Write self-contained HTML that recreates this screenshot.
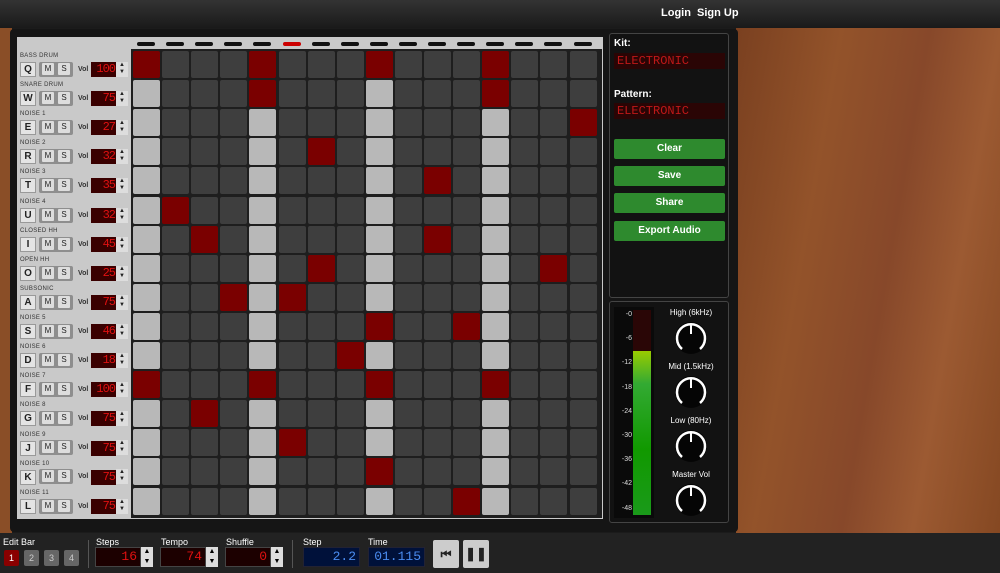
<!DOCTYPE html><html><head><style>
*{margin:0;padding:0;box-sizing:border-box}
body{width:1000px;height:573px;overflow:hidden;background:#1b1b1b;font-family:"Liberation Sans",sans-serif;position:relative}
.a{position:absolute}
#wood{left:736px;top:28px;width:264px;height:505px;background:linear-gradient(100deg,#7a4020,#93532a 30%,#87482a 55%,#9c5a32 75%,#854822)}
#top{left:0;top:0;width:1000px;height:28px;background:linear-gradient(#333,#1a1a1a);color:#fff;font-size:11px;font-weight:bold}
#frame{left:10px;top:29px;width:728px;height:503px;background:#151515;border-radius:4px}
#lwood{left:0;top:28px;width:12px;height:505px;background:#8a4e27}
#inner{left:17px;top:37px;width:586px;height:482px;background:#c9c9c9}
#gb{left:131px;top:49px;width:471px;height:469px;background:#1e1e1e}
.lab{font-size:6px;color:#333;left:20px;letter-spacing:.3px}
.k{width:16px;height:15px;background:#e4e4e4;border:1px solid #999;font-size:10px;font-weight:bold;text-align:center;line-height:13px;color:#222}
.g{width:34px;height:15px;background:#8e8e8e;border-radius:2px}
.ms{width:12px;height:12px;background:#ddd;font-size:8px;text-align:center;line-height:12px;color:#222;top:1px;border-radius:1px}
.vl{font-size:7px;color:#333;font-weight:bold}
.d{width:25px;height:15px;background:#3a0000;color:#e01010;font-family:"Liberation Mono",monospace;font-size:12px;text-align:right;line-height:15px;padding-right:1px;letter-spacing:-1px}
.ar{width:12px;height:15px;background:#ddd;font-size:6px;line-height:7px;text-align:center;color:#222}
.c{width:27px;height:27px;border-radius:2px;background:#3e3e3e}
.L{background:#b8b8b8}.R{background:#7a0000}
.ind{width:18px;height:4px;border-radius:2px;background:#111;top:42px}
.pn{border:1px solid #444;border-radius:3px;background:#121212}
.btn{left:614px;width:111px;height:20px;background:#2e8a2e;border-radius:2px;color:#fff;font-size:10px;font-weight:bold;text-align:center;line-height:20px}
.lcd{left:614px;width:111px;height:16px;background:#2a0505;color:#c01818;font-family:"Liberation Mono",monospace;font-size:12px;line-height:16px;padding-left:3px}
.wl{color:#fff;font-size:10px;font-weight:bold}
.sc{color:#ddd;font-size:7px;left:614px;width:18px;text-align:right}
.kn{color:#fff;font-size:8px;width:80px;text-align:center;left:651px}
.bl{color:#fff;font-size:9px}
.bd{height:20px;background:#1c0000;border:1px solid #444;color:#e01010;font-family:"Liberation Mono",monospace;font-size:13px;text-align:right;line-height:18px;padding-right:3px}
.bu{height:20px;background:#00113a;border:1px solid #223;color:#4a8cf0;font-family:"Liberation Mono",monospace;font-size:13px;text-align:right;line-height:18px;padding-right:3px}
.bar{width:15px;height:16px;background:#666;color:#ccc;font-size:9px;text-align:center;line-height:16px;border-radius:2px;top:550px}
.ba{width:12px;height:20px;background:#ddd;top:547px;font-size:7px;line-height:10px;text-align:center}
</style></head><body>
<div class="a" id="top"><span class="a" style="left:661px;top:7px">Login</span><span class="a" style="left:697px;top:7px">Sign Up</span></div>
<div class="a" id="lwood"></div>
<div class="a" id="wood"></div>
<div class="a" id="frame"></div>
<div class="a" id="inner"></div>
<div class="a" id="gb"></div>
<div id="g"></div>
<div class="a pn" style="left:609px;top:33px;width:120px;height:265px"></div>
<div class="a wl" style="left:614px;top:38px">Kit:</div>
<div class="a lcd" style="top:53px">ELECTRONIC</div>
<div class="a wl" style="left:614px;top:89px">Pattern:</div>
<div class="a lcd" style="top:103px">ELECTRONIC</div>
<div class="a btn" style="top:139px">Clear</div>
<div class="a btn" style="top:166px">Save</div>
<div class="a btn" style="top:193px">Share</div>
<div class="a btn" style="top:221px">Export Audio</div>
<div class="a pn" style="left:609px;top:301px;width:120px;height:222px"></div>
<div class="a" style="left:614px;top:307px;width:40px;height:211px;background:#0a0a0a"></div>
<div class="a" style="left:633px;top:310px;width:18px;height:41px;background:#2a0606"></div>
<div class="a" style="left:633px;top:351px;width:18px;height:164px;background:linear-gradient(#9c0 ,#3a3 20%,#190 60%,#1a9a1a)"></div>
<div id="sc"></div>
<div class="a kn" style="top:308px">High (6kHz)</div>
<div class="a kn" style="top:362px">Mid (1.5kHz)</div>
<div class="a kn" style="top:416px">Low (80Hz)</div>
<div class="a kn" style="top:470px">Master Vol</div>
<div id="kn"></div>
<div class="a" style="left:0;top:533px;width:1000px;height:40px;background:#222"></div>
<div class="a bl" style="left:3px;top:537px">Edit Bar</div>
<div class="a bar" style="left:4px;background:#8a0000;color:#fff">1</div>
<div class="a bar" style="left:24px">2</div>
<div class="a bar" style="left:44px">3</div>
<div class="a bar" style="left:64px">4</div>
<div class="a" style="left:88px;top:540px;width:1px;height:28px;background:#555"></div>
<div class="a bl" style="left:96px;top:537px">Steps</div>
<div class="a bd" style="left:95px;top:547px;width:46px">16</div><div class="a ba" style="left:141px">▲<br>▼</div>
<div class="a bl" style="left:161px;top:537px">Tempo</div>
<div class="a bd" style="left:160px;top:547px;width:46px">74</div><div class="a ba" style="left:206px">▲<br>▼</div>
<div class="a bl" style="left:226px;top:537px">Shuffle</div>
<div class="a bd" style="left:225px;top:547px;width:46px">0</div><div class="a ba" style="left:271px">▲<br>▼</div>
<div class="a" style="left:292px;top:540px;width:1px;height:28px;background:#555"></div>
<div class="a bl" style="left:303px;top:537px">Step</div>
<div class="a bu" style="left:303px;top:547px;width:57px">2.2</div>
<div class="a bl" style="left:368px;top:537px">Time</div>
<div class="a bu" style="left:368px;top:547px;width:57px">01.115</div>
<div class="a" style="left:433px;top:540px;width:26px;height:28px;background:#ccc;border-radius:2px;color:#222;font-size:12px;text-align:center;line-height:28px;font-weight:bold">⏮</div>
<div class="a" style="left:463px;top:540px;width:26px;height:28px;background:#ccc;border-radius:2px;color:#222;font-size:13px;text-align:center;line-height:28px;font-weight:bold">❚❚</div>
<div class="a lab" style="top:53px">BASS DRUM</div><div class="a lab" style="top:82px">SNARE DRUM</div><div class="a lab" style="top:111px">NOISE 1</div><div class="a lab" style="top:140px">NOISE 2</div><div class="a lab" style="top:169px">NOISE 3</div><div class="a lab" style="top:199px">NOISE 4</div><div class="a lab" style="top:228px">CLOSED HH</div><div class="a lab" style="top:257px">OPEN HH</div><div class="a lab" style="top:286px">SUBSONIC</div><div class="a lab" style="top:315px">NOISE 5</div><div class="a lab" style="top:344px">NOISE 6</div><div class="a lab" style="top:373px">NOISE 7</div><div class="a lab" style="top:402px">NOISE 8</div><div class="a lab" style="top:432px">NOISE 9</div><div class="a lab" style="top:461px">NOISE 10</div><div class="a lab" style="top:490px">NOISE 11</div>
<div class="a k" style="left:20px;top:62px">Q</div><div class="a k" style="left:20px;top:91px">W</div><div class="a k" style="left:20px;top:120px">E</div><div class="a k" style="left:20px;top:149px">R</div><div class="a k" style="left:20px;top:178px">T</div><div class="a k" style="left:20px;top:208px">U</div><div class="a k" style="left:20px;top:237px">I</div><div class="a k" style="left:20px;top:266px">O</div><div class="a k" style="left:20px;top:295px">A</div><div class="a k" style="left:20px;top:324px">S</div><div class="a k" style="left:20px;top:353px">D</div><div class="a k" style="left:20px;top:382px">F</div><div class="a k" style="left:20px;top:411px">G</div><div class="a k" style="left:20px;top:441px">J</div><div class="a k" style="left:20px;top:470px">K</div><div class="a k" style="left:20px;top:499px">L</div>
<div class="a d" style="left:91px;top:62px">100</div><div class="a d" style="left:91px;top:91px">75</div><div class="a d" style="left:91px;top:120px">27</div><div class="a d" style="left:91px;top:149px">32</div><div class="a d" style="left:91px;top:178px">35</div><div class="a d" style="left:91px;top:208px">32</div><div class="a d" style="left:91px;top:237px">45</div><div class="a d" style="left:91px;top:266px">25</div><div class="a d" style="left:91px;top:295px">75</div><div class="a d" style="left:91px;top:324px">46</div><div class="a d" style="left:91px;top:353px">18</div><div class="a d" style="left:91px;top:382px">100</div><div class="a d" style="left:91px;top:411px">75</div><div class="a d" style="left:91px;top:441px">75</div><div class="a d" style="left:91px;top:470px">75</div><div class="a d" style="left:91px;top:499px">75</div>
<script>
var P=["R...R...R...R...","L...R...L...R...","L...L...L...L..R","L...L.R.L...L...","L...L...L.R.L...","LR..L...L...L...","L.R.L...L.R.L...","L...L.R.L...L.R.","L..RLR..L...L...","L...L...R..RL...","L...L..RL...L...","R...R...R...R...","L.R.L...L...L...","L...LR..L...L...","L...L...R...L...","L...L...L..RL..."];
var h="";
for(var c=0;c<16;c++)h+='<div class="a ind" style="left:'+(137+c*29.1)+'px;'+(c==5?'background:#c00':'')+'"></div>';
for(var r=0;r<16;r++){var t=51+r*29.1,y=Math.round(t+11);
h+='<div class="a g" style="left:39px;top:'+y+'px"><div class="a ms" style="left:3px">M</div><div class="a ms" style="left:19px">S</div></div><div class="a vl" style="left:78px;top:'+(y+4)+'px">Vol</div><div class="a ar" style="left:116px;top:'+y+'px">▲<br>▼</div>';
for(var c=0;c<16;c++){var s=P[r][c];h+='<div class="a c '+(s=='.'?'':s)+'" style="left:'+(133+c*29.1)+'px;top:'+t+'px"></div>';}}
document.getElementById('g').innerHTML=h;
var s="",L=["-0","-6","-12","-18","-24","-30","-36","-42","-48"];
for(var i=0;i<9;i++)s+='<div class="a sc" style="top:'+(311+i*24.2)+'px">'+L[i]+'</div>';
document.getElementById('sc').innerHTML=s;
var k="";[318,372,426,480].forEach(function(y){k+='<svg class="a" style="left:670px;top:'+y+'px" width="42" height="40" viewBox="0 0 42 40"><circle cx="21" cy="20" r="16" fill="#050505"/><path d="M12 31 A14 14 0 1 1 30 31" fill="none" stroke="#fff" stroke-width="2.5"/><line x1="21" y1="6" x2="21" y2="16" stroke="#fff" stroke-width="2"/></svg>'});
document.getElementById('kn').innerHTML=k;
</script>
</body></html>
